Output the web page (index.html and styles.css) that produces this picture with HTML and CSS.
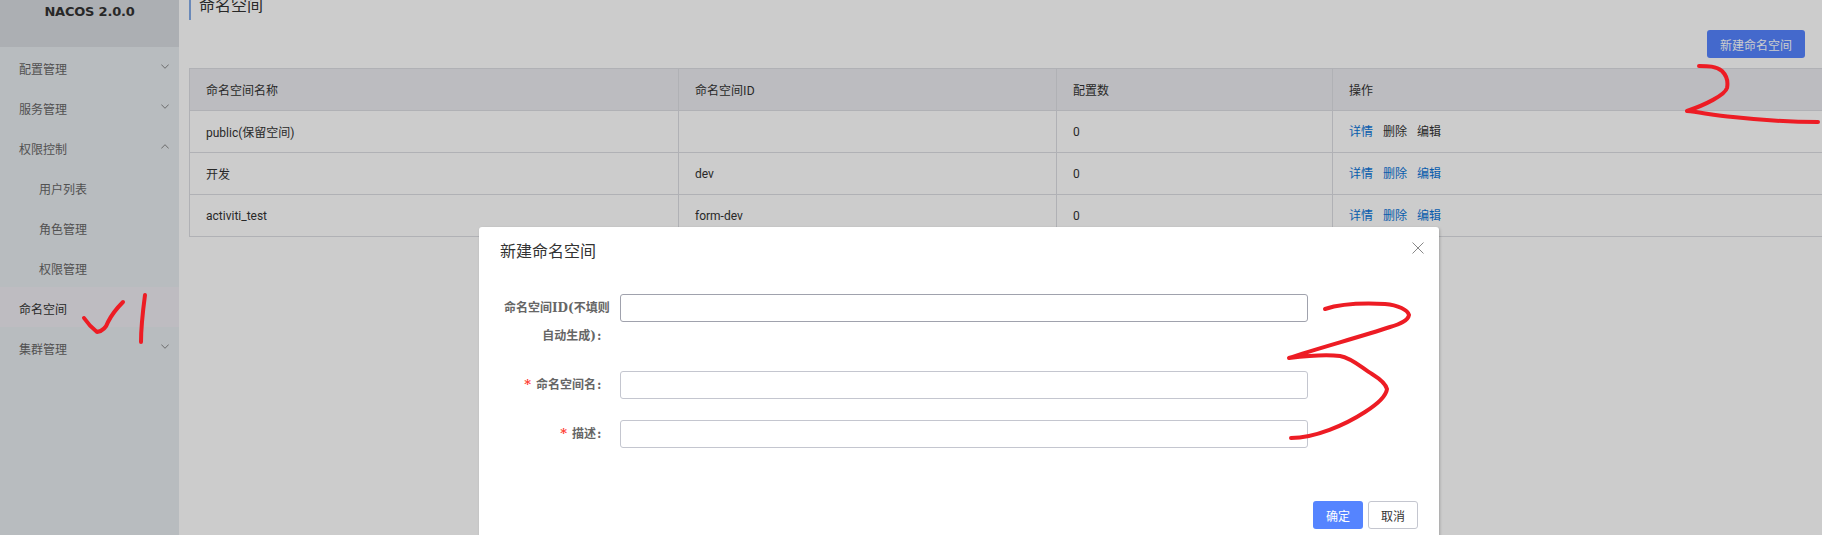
FILE: index.html
```html
<!DOCTYPE html>
<html lang="zh-CN">
<head>
<meta charset="utf-8">
<title>NACOS</title>
<link rel="stylesheet" href="styles.css">
</head>
<body>
<div class="app">
  <aside class="sidebar">
    <div class="brand">NACOS 2.0.0</div>
    <nav class="menu">
      <div class="item"><span>配置管理</span><svg class="chev" viewBox="0 0 8 5"><path d="M0.3 0.5 L4 4.3 L7.7 0.5"/></svg></div>
      <div class="item"><span>服务管理</span><svg class="chev" viewBox="0 0 8 5"><path d="M0.3 0.5 L4 4.3 L7.7 0.5"/></svg></div>
      <div class="item"><span>权限控制</span><svg class="chev" viewBox="0 0 8 5"><path d="M0.3 4.5 L4 0.7 L7.7 4.5"/></svg></div>
      <div class="item sub"><span>用户列表</span></div>
      <div class="item sub"><span>角色管理</span></div>
      <div class="item sub"><span>权限管理</span></div>
      <div class="item active"><span>命名空间</span></div>
      <div class="item"><span>集群管理</span><svg class="chev" viewBox="0 0 8 5"><path d="M0.3 0.5 L4 4.3 L7.7 0.5"/></svg></div>
    </nav>
  </aside>
  <main class="main">
    <h1 class="title">命名空间</h1>
    <div class="toolbar"><button class="btn btn-new">新建命名空间</button></div>
    <table class="grid">
      <colgroup><col class="c1"><col class="c2"><col class="c3"><col class="c4"></colgroup>
      <thead>
        <tr><th>命名空间名称</th><th>命名空间ID</th><th>配置数</th><th>操作</th></tr>
      </thead>
      <tbody>
        <tr><td>public(保留空间)</td><td></td><td>0</td><td class="ops"><a class="op">详情</a><a class="op dark">删除</a><a class="op dark">编辑</a></td></tr>
        <tr><td>开发</td><td>dev</td><td>0</td><td class="ops"><a class="op">详情</a><a class="op">删除</a><a class="op">编辑</a></td></tr>
        <tr><td>activiti_test</td><td>form-dev</td><td>0</td><td class="ops"><a class="op">详情</a><a class="op">删除</a><a class="op">编辑</a></td></tr>
      </tbody>
    </table>
  </main>
</div>
<div class="overlay"></div>
<section class="dialog">
  <header class="dialog-head">
    <h2 class="dialog-title">新建命名空间</h2>
    <svg class="close" viewBox="0 0 12 12"><path d="M0.5 0.5 L11.5 11.5 M11.5 0.5 L0.5 11.5"/></svg>
  </header>
  <form class="form">
    <div class="row row-tall">
      <label class="label">命名空间ID(不填则<br>自动生成)<span class="colon">:</span></label>
      <input class="field field-focus" type="text">
    </div>
    <div class="row">
      <label class="label"><span class="req">*</span>命名空间名<span class="colon">:</span></label>
      <input class="field" type="text">
    </div>
    <div class="row">
      <label class="label"><span class="req">*</span>描述<span class="colon">:</span></label>
      <input class="field" type="text">
    </div>
  </form>
  <footer class="dialog-foot">
    <button class="btn btn-ok">确定</button>
    <button class="btn btn-cancel">取消</button>
  </footer>
</section>
<svg class="ink" viewBox="0 0 1822 535">
  <path d="M84 318 C88 324 92 328 97 332 C103 331 106 328 108 322 C112 314 118 307 123 302"/>
  <path d="M145 295 C143 310 141 326 141 342"/>
  <path d="M1699 66 C1708 66 1716 66 1722 71 C1727 76 1728 83 1727 88 C1725 95 1705 105 1687 111 C1700 112 1715 116 1733 117 C1760 120 1790 122 1818 122"/>
  <path d="M1325 309 C1340 304 1365 303 1385 304 C1398 305 1408 310 1409 315 C1408 321 1400 324 1390 327 C1360 337 1315 349 1289 358 C1305 356 1325 354 1340 356 C1352 358 1362 368 1372 374 C1380 379 1386 385 1387 389 C1386 397 1376 405 1365 412 C1345 425 1315 438 1291 438"/>
</svg>
</body>
</html>
```
FILE: styles.css
```css
* { box-sizing: border-box; }
html, body { margin: 0; height: 100%; overflow: hidden; }
body {
  position: relative;
  font-family: "Noto Sans CJK SC", "Noto Sans", sans-serif;
  font-size: 12px;
  color: #333;
  background: #fff;
}
.app { display: flex; height: 535px; }

.sidebar { width: 179px; flex: none; background: #e6ebef; }
.brand {
  height: 47px;
  padding-top: 3px;
  background: #d8dbe0;
  font-family: "DejaVu Sans", sans-serif;
  font-size: 13px;
  letter-spacing: -0.2px;
  line-height: 18px;
  font-weight: bold;
  text-align: center;
  color: #333;
}
.item {
  height: 40px;
  padding: 2px 10px 0 19px;
  display: flex;
  align-items: center;
  justify-content: space-between;
  color: #666;
}
.item.sub { padding-left: 39px; }
.item.active { background: #eeecf2; color: #333; }
.chev { width: 8px; height: 5px; margin-top: -3px; fill: none; stroke: #888; stroke-width: 1; }

.main { flex: 1; min-width: 0; padding-left: 10px; }
.title {
  margin: 0;
  height: 20px;
  padding-left: 8px;
  border-left: 2px solid #85ace8;
  font-size: 16px;
  font-weight: normal;
  line-height: 9px;
  color: #333;
  overflow: hidden;
}
.toolbar { display: flex; justify-content: flex-end; padding: 10px 17px 10px 0; }
.btn {
  height: 28px;
  border-radius: 3px;
  font-family: inherit;
  font-size: 12px;
  padding: 0;
  cursor: pointer;
}
.btn-new { width: 98px; background: #5584ff; border: 0; color: #fff; }
.grid {
  width: 1633px;
  table-layout: fixed;
  border-collapse: collapse;
  border: 1px solid #dcdee3;
  border-right: 0;
}
.c1 { width: 489px; }
.c2 { width: 378px; }
.c3 { width: 276px; }
.c4 { width: 490px; }
.grid th, .grid td {
  height: 42px;
  padding: 0 16px;
  border: 1px solid #dcdee3;
  text-align: left;
  font-weight: normal;
  color: #333;
}
.grid th { background: #ebecf0; }
.grid td { font-family: Roboto, "Noto Sans CJK SC", sans-serif; }
.grid td.ops { padding-bottom: 2px; }
.op { margin-right: 10px; color: #0a74d8; }
.op.dark { color: #333; }

.overlay { position: absolute; inset: 0; background: rgba(0, 0, 0, 0.2); }

.dialog {
  position: absolute;
  left: 479px;
  top: 227px;
  width: 960px;
  height: 330px;
  background: #fff;
  border-radius: 3px;
  box-shadow: 1px 1px 3px rgba(0, 0, 0, 0.2);
  display: flex;
  flex-direction: column;
}
.dialog-head { position: relative; padding: 11px 21px 0; height: 67px; }
.dialog-title { margin: 0; font-size: 16px; font-weight: normal; line-height: 24px; color: #333; }
.close {
  position: absolute;
  left: 933px;
  top: 15px;
  width: 12px;
  height: 12px;
  fill: none;
  stroke: #888;
  stroke-width: 1;
}
.form { display: flex; flex-direction: column; gap: 21px; padding-left: 25px; }
.row { display: flex; gap: 12px; align-items: flex-start; }
.row-tall { height: 56px; }
.label {
  width: 104px;
  flex: none;
  text-align: right;
  font-family: "DejaVu Serif", "Noto Sans CJK SC", sans-serif;
  font-weight: bold;
  line-height: 28px;
  color: #666;
  white-space: nowrap;
}
.colon { display: inline-block; width: 12px; text-align: left; padding-left: 1px; }
.req { color: #ff3b30; margin-right: 5px; font-size: 13px; }
.field {
  width: 688px;
  height: 28px;
  border: 1px solid #c4c6cf;
  border-radius: 3px;
  background: #fff;
  outline: 0;
  padding: 0 8px;
}
.field-focus { border-color: #a0a2ad; }
.dialog-foot { position: absolute; left: 834px; top: 274px; display: flex; gap: 5px; }
.btn-ok { width: 50px; background: #5584ff; border: 0; color: #fff; }
.btn-cancel { width: 50px; background: #fff; border: 1px solid #c4c6cf; color: #333; }

.ink {
  position: absolute;
  left: 0;
  top: 0;
  width: 1822px;
  height: 535px;
  fill: none;
  stroke: #ed1c24;
  stroke-width: 4;
  stroke-linecap: round;
  stroke-linejoin: round;
  pointer-events: none;
}
```
